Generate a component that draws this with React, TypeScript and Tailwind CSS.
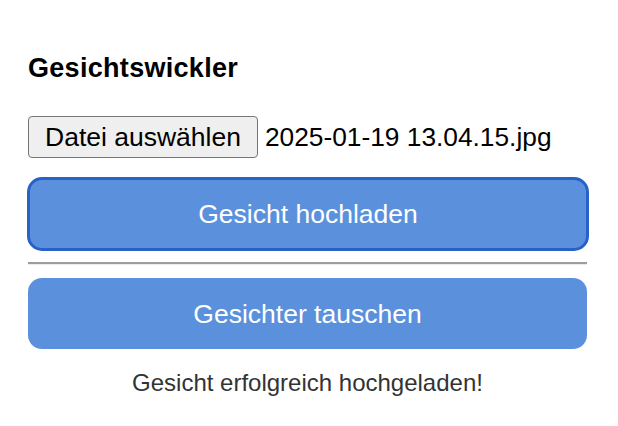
const font = { fontFamily: '"Liberation Sans", Arial, Helvetica, sans-serif' };

export default function App() {
  return (
    <div className="min-h-screen bg-white" style={font}>
      <div className="pl-[28px] pt-[53px] w-[587px]">
        <h2 className="text-[27px] leading-[30px] font-bold tracking-[0.3px] text-black">
          Gesichtswickler
        </h2>

        {/* file picker */}
        <div className="mt-[33px] flex items-center gap-[7px]">
          <span className="h-[42px] flex items-center px-[16px] bg-[#efefef] border border-[#767676] rounded-[4px] text-[26.5px] leading-[30px] text-black">
            Datei auswählen
          </span>
          <span className="text-[26.3px] leading-[30px] text-black">2025-01-19 13.04.15.jpg</span>
        </div>

        <button className="mt-[19px] -ml-px w-[562px] h-[74px] rounded-[15px] border-[3px] border-[#2862c8] bg-[#5b91dc] text-white text-[26.5px] leading-[30px] flex items-center justify-center">
          Gesicht hochladen
        </button>

        <div className="mt-[11px] border-t-2 border-[#9e9e9e] border-b border-b-[#ececec]" />

        <button className="mt-[13px] w-full h-[71px] rounded-[14px] bg-[#5b91dc] text-white text-[26.5px] leading-[30px] flex items-center justify-center">
          Gesichter tauschen
        </button>

        <p className="mt-[20px] text-center text-[24px] leading-[28px] text-[#333333]">
          Gesicht erfolgreich hochgeladen!
        </p>
      </div>
    </div>
  );
}
